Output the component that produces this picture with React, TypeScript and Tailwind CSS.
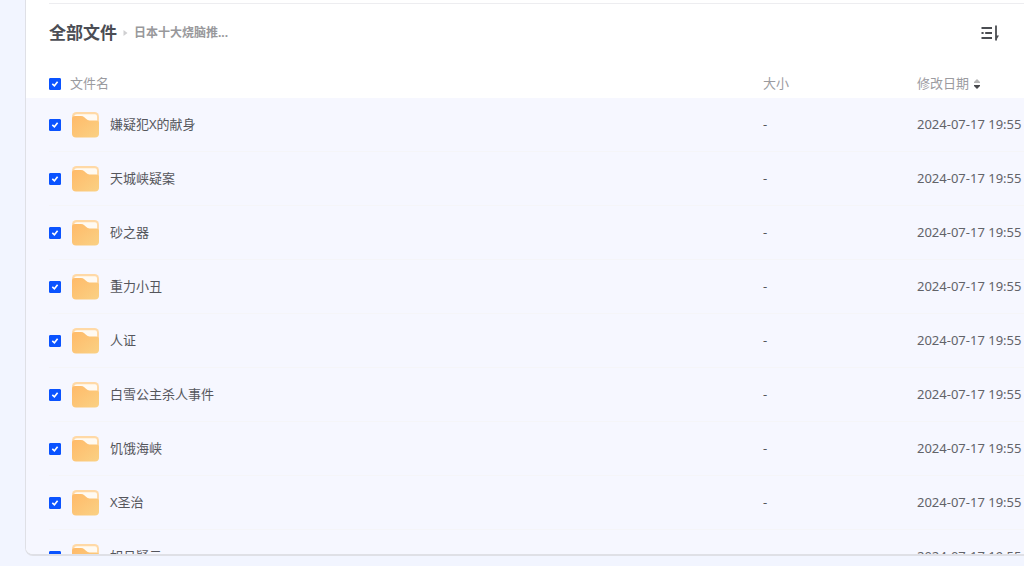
import { useState } from 'react';

type FileItem = {
  id: number;
  name: string;
  size: string;
  modified: string;
};

const files: FileItem[] = [
  '嫌疑犯X的献身',
  '天城峡疑案',
  '砂之器',
  '重力小丑',
  '人证',
  '白雪公主杀人事件',
  '饥饿海峡',
  'X圣治',
  '如月疑云',
].map((name, i) => ({ id: i + 1, name, size: '-', modified: '2024-07-17 19:55' }));

type CheckboxProps = {
  id: string;
  label?: string;
  checked: boolean;
  onChange: () => void;
};

function Checkbox({ id, label, checked, onChange }: CheckboxProps) {
  return (
    <span className="relative block w-3 h-3 shrink-0">
      <input
        id={id}
        type="checkbox"
        aria-label={label}
        checked={checked}
        onChange={onChange}
        className="block w-3 h-3 appearance-none rounded-[1px] border border-gray-300 bg-white checked:border-[#0a53ff] checked:bg-[#0a53ff] cursor-pointer"
      />
      {checked && (
        <svg
          className="absolute inset-0 w-3 h-3 pointer-events-none"
          viewBox="0 0 12 12"
          fill="none"
          stroke="#fff"
          strokeWidth="1.6"
          aria-hidden
        >
          <path d="M3.3 5.9 5.4 7.8 8.6 3.8" />
        </svg>
      )}
    </span>
  );
}

function FolderIcon() {
  return (
    <svg className="w-7 h-7 shrink-0" viewBox="0 0 28 28" aria-hidden>
      <defs>
        <linearGradient id="folder-front" x1="0" y1="0" x2="1" y2="1">
          <stop offset="0" stopColor="#ffba69" />
          <stop offset="1" stopColor="#fad184" />
        </linearGradient>
      </defs>
      <rect x="0" y="1" width="27" height="25" rx="4.5" fill="#ffd9a6" />
      <path d="M2 5.5Q2.4 3.2 5 3.2H23Q25 3.2 25 5.2V10H10Z" fill="#fffaf2" />
      <path
        d="M0 8Q0 5 3 5H9Q11 5 12.3 6.2L14 7.8Q15.6 9.4 17.5 9.4H24.5Q27 9.4 27 12V22.5Q27 26.5 23 26.5H4Q0 26.5 0 22.5Z"
        fill="url(#folder-front)"
      />
    </svg>
  );
}

function ViewModeIcon() {
  return (
    <svg className="w-[18px] h-[18px]" viewBox="0 0 18 18" fill="none" stroke="#4b4d52" strokeWidth="1.8" aria-hidden>
      <path d="M0.5 4H11M0.5 14H11M0.5 9H2.6M4.2 9H11" />
      <path d="M15 1.5V16.5" />
      <path d="M15 11.5H18L15 16.5Z" fill="#4b4d52" stroke="none" />
    </svg>
  );
}

function SortIcon() {
  return (
    <svg className="w-2 h-3" viewBox="0 0 8 12" aria-hidden>
      <path d="M1 5V4L4 1 7 4V5Z" fill="#b4b4b4" />
      <path d="M1 7H7V8L4 11 1 8Z" fill="#48494d" />
    </svg>
  );
}

export default function App() {
  const [selected, setSelected] = useState<number[]>(files.map((f) => f.id));

  const allSelected = selected.length === files.length;

  const toggleAll = () => setSelected(allSelected ? [] : files.map((f) => f.id));

  const toggle = (id: number) =>
    setSelected((prev) => (prev.includes(id) ? prev.filter((s) => s !== id) : [...prev, id]));

  return (
    <div className="h-screen pl-[25px] pb-[10px] bg-[#f2f5ff] text-[#55565c] font-['Noto_Sans','Noto_Sans_CJK_SC',sans-serif]">
      <main className="flex flex-col h-full overflow-hidden bg-white border-l border-b-2 border-[#dfe0e6] rounded-bl-lg">
        <header className="flex items-center justify-between shrink-0 h-[59px] mt-[3px] ml-[23px] pr-[25px] border-t border-[#ededf0]">
          <nav className="flex items-center" aria-label="路径">
            <a href="#all" className="text-[17px] leading-6 font-bold text-[#4b4d54]">
              全部文件
            </a>
            <svg className="w-[5px] h-2 mx-1.5 shrink-0" viewBox="0 0 5 8" aria-hidden>
              <path d="M0.5 1 4.5 4 0.5 7Z" fill="#d0d0d2" />
            </svg>
            <a href="#current" className="text-xs font-bold text-[#98989b]">
              日本十大烧脑推...
            </a>
          </nav>
          <button type="button" aria-label="切换视图" className="cursor-pointer">
            <ViewModeIcon />
          </button>
        </header>

        <div className="flex-1 min-h-0 mt-[7px] overflow-hidden">
          <table className="w-full table-fixed border-separate border-spacing-0 text-left text-[13px]">
            <colgroup>
              <col className="w-[23px]" />
              <col />
              <col className="w-[154px]" />
              <col className="w-[107px]" />
            </colgroup>
            <thead className="text-[#9b9b9f]">
              <tr className="h-[29px]">
                <td className="p-0" />
                <th className="p-0 font-normal">
                  <div className="flex items-center gap-[9px]">
                    <Checkbox id="select-all" checked={allSelected} onChange={toggleAll} />
                    <label htmlFor="select-all">文件名</label>
                  </div>
                </th>
                <th className="p-0 font-normal">大小</th>
                <th className="p-0 font-normal">
                  <button type="button" className="flex items-center gap-1 cursor-pointer">
                    修改日期
                    <SortIcon />
                  </button>
                </th>
              </tr>
            </thead>
            <tbody>
              {files.map((file) => (
                <tr
                  key={file.id}
                  className={`h-[54px] ${selected.includes(file.id) ? 'bg-[#f6f7ff]' : 'bg-white'}`}
                >
                  <td className="p-0" />
                  <td className="p-0 border-b border-[#f5f5f8]">
                    <div className="flex items-center">
                      <Checkbox
                        id={`file-${file.id}`}
                        label={file.name}
                        checked={selected.includes(file.id)}
                        onChange={() => toggle(file.id)}
                      />
                      <a href={`#file-${file.id}`} className="flex items-center gap-2.5 ml-[11px]">
                        <FolderIcon />
                        {file.name}
                      </a>
                    </div>
                  </td>
                  <td className="p-0 border-b border-[#f5f5f8]">{file.size}</td>
                  <td className="p-0 border-b border-[#f5f5f8] text-[#626369] whitespace-nowrap">
                    {file.modified}
                  </td>
                </tr>
              ))}
            </tbody>
          </table>
        </div>
      </main>
    </div>
  );
}
